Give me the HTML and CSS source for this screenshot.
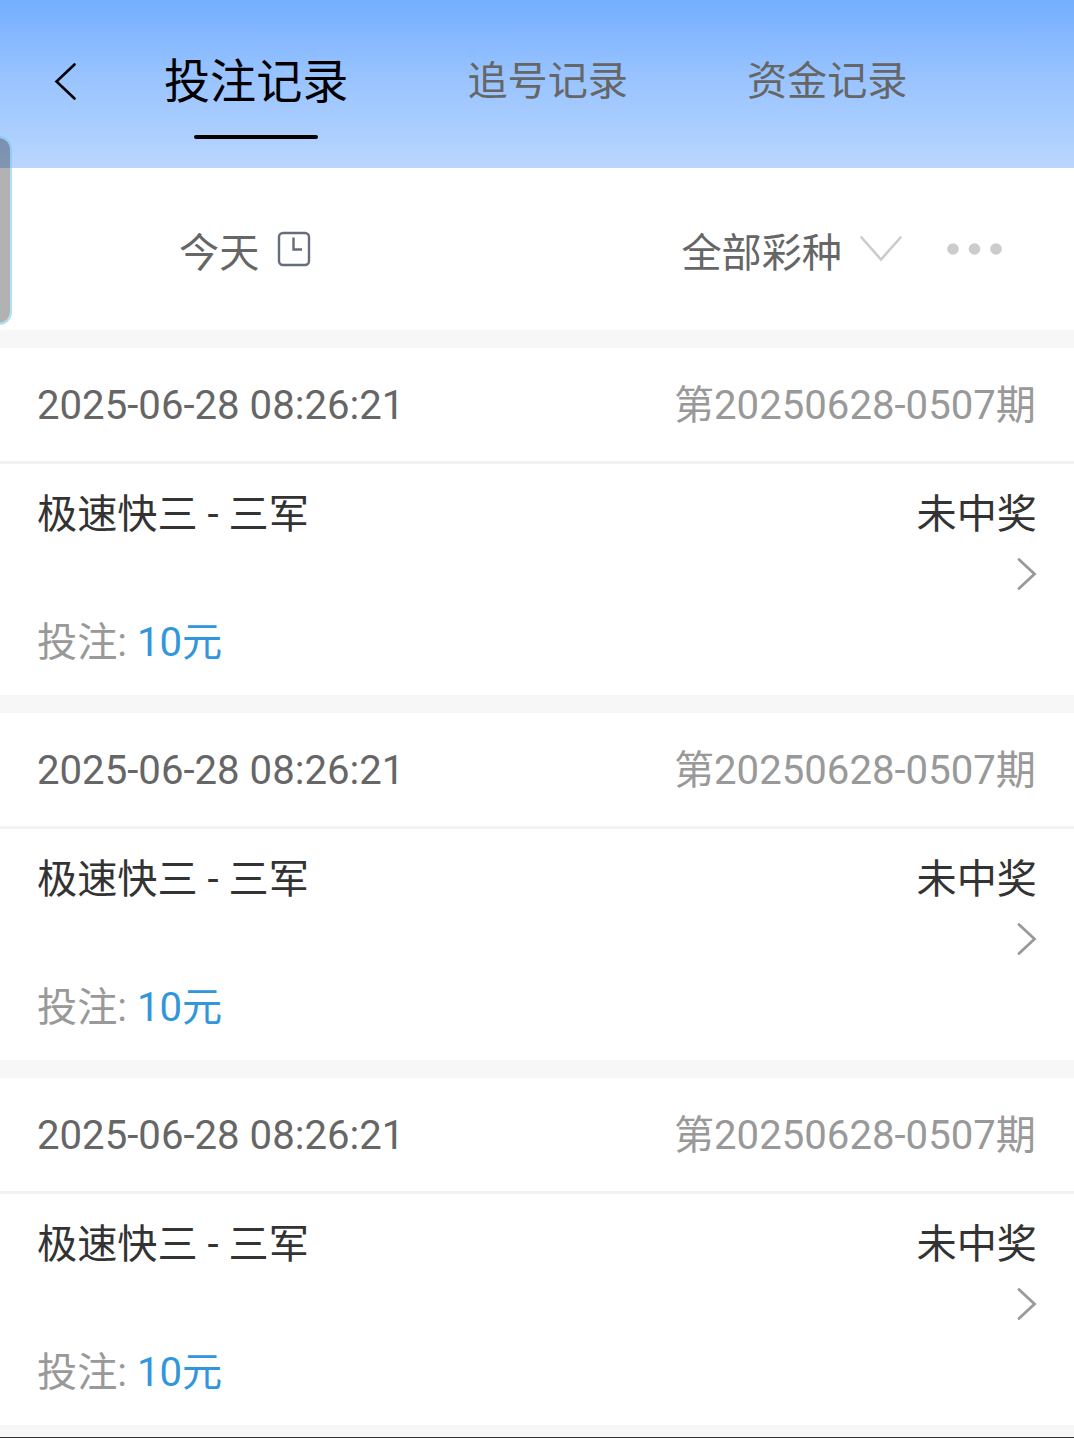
FILE: index.html
```html
<!DOCTYPE html>
<html lang="zh-CN">

<head>
    <meta charset="UTF-8">
    <title>投注记录</title>
    <link rel="stylesheet" href="styles.css">
</head>

<body>
    <div class="screen">
        <header class="header">
            <svg class="back" width="24" height="40" viewBox="0 0 24 40">
                <path d="M21.5 3.5 3.5 20.5 21.5 37.5"></path>
            </svg>
            <nav class="tabs">
                <a class="tab active">投注记录</a>
                <a class="tab">追号记录</a>
                <a class="tab">资金记录</a>
            </nav>
        </header>

        <section class="filters">
            <div class="filter">
                <span>今天</span>
                <svg class="clock" width="34" height="36" viewBox="0 0 34 36">
                    <rect x="2" y="2" width="30" height="32" rx="4"></rect>
                    <path d="M16.5 6.5V18.5H25"></path>
                </svg>
            </div>
            <div class="filter">
                <span>全部彩种</span>
                <svg class="arrow-down" width="42" height="26" viewBox="0 0 42 26">
                    <path d="M1.5 1.5 21 23.5 40.5 1.5"></path>
                </svg>
                <svg class="dots" width="56" height="12" viewBox="0 0 56 12">
                    <circle cx="6" cy="6" r="5.8"></circle>
                    <circle cx="27.5" cy="6" r="5.8"></circle>
                    <circle cx="49" cy="6" r="5.8"></circle>
                </svg>
            </div>
        </section>

        <main class="list">
            <article class="record">
                <div class="record-head">
                    <span class="time">2025-06-28 08:26:21</span>
                    <span class="issue">第20250628-0507期</span>
                </div>
                <div class="record-body">
                    <div class="row">
                        <span>极速快三 - 三军</span>
                        <span>未中奖</span>
                    </div>
                    <svg class="arrow" width="20" height="34" viewBox="0 0 20 34">
                        <path d="M2 2.5 17.5 17 2 31.5"></path>
                    </svg>
                    <p class="bet">投注: <b>10元</b></p>
                </div>
            </article>

            <article class="record">
                <div class="record-head">
                    <span class="time">2025-06-28 08:26:21</span>
                    <span class="issue">第20250628-0507期</span>
                </div>
                <div class="record-body">
                    <div class="row">
                        <span>极速快三 - 三军</span>
                        <span>未中奖</span>
                    </div>
                    <svg class="arrow" width="20" height="34" viewBox="0 0 20 34">
                        <path d="M2 2.5 17.5 17 2 31.5"></path>
                    </svg>
                    <p class="bet">投注: <b>10元</b></p>
                </div>
            </article>

            <article class="record">
                <div class="record-head">
                    <span class="time">2025-06-28 08:26:21</span>
                    <span class="issue">第20250628-0507期</span>
                </div>
                <div class="record-body">
                    <div class="row">
                        <span>极速快三 - 三军</span>
                        <span>未中奖</span>
                    </div>
                    <svg class="arrow" width="20" height="34" viewBox="0 0 20 34">
                        <path d="M2 2.5 17.5 17 2 31.5"></path>
                    </svg>
                    <p class="bet">投注: <b>10元</b></p>
                </div>
            </article>
        </main>

        <div class="edge-handle"></div>
    </div>
</body>

</html>
```
FILE: styles.css
```css
* {
    box-sizing: border-box;
}

body {
    margin: 0;
    font-family: Roboto, "Noto Sans CJK SC", sans-serif;
    font-size: 40.15px;
    line-height: 60px;
    color: #333;
}

svg {
    display: block;
    flex: none;
    fill: none;
    stroke-linecap: round;
}

.screen {
    position: relative;
    height: 1438px;
    overflow: hidden;
    background: #f7f7f7;
    border-bottom: 1px solid #333;
}

/* header */
.header {
    display: flex;
    height: 168px;
    padding-left: 53px;
    background: linear-gradient(#74aeff, #98c3ff 45%, #b9d6ff);
}

.back {
    margin-top: 61px;
    stroke: #000;
    stroke-width: 2.6;
}

.tabs {
    display: flex;
    gap: 119px;
    margin-left: 87px;
    padding-top: 52px;
}

.tab {
    color: #666;
    white-space: nowrap;
}

.tab.active {
    font-size: 46.1px;
    color: #000;
}

.tab.active::after {
    content: "";
    display: block;
    width: 124px;
    height: 4px;
    margin: 23px auto 0;
    border-radius: 2px;
    background: #000;
}

/* filters */
.filters {
    display: flex;
    justify-content: space-between;
    height: 162px;
    padding: 0 71px 0 179px;
    background: #fff;
    color: #666;
}

.filter {
    display: flex;
    align-items: center;
}

.filter span {
    padding-top: 9px;
}

.clock {
    margin-left: 18px;
    stroke: #666c7c;
    stroke-width: 2.4;
}

.clock path {
    stroke-linecap: butt;
}

.arrow-down {
    margin-left: 18px;
    stroke: #ccc;
    stroke-width: 2.6;
}

.dots {
    margin-left: 45px;
    fill: #ccc;
}

/* records */
.list {
    display: grid;
    gap: 18px;
    padding-top: 18px;
}

.record {
    height: 347px;
    background: #fff;
}

.record-head,
.row {
    display: flex;
    justify-content: space-between;
}

.record-head {
    height: 116px;
    padding: 28px 38px 0 37px;
    border-bottom: 3px solid #f2f2f2;
}

.time {
    color: #666;
}

.issue,
.bet {
    color: #999;
}

.record-body {
    padding: 21px 37px 0;
}

.arrow {
    margin: 12px 0 0 auto;
    stroke: #999;
    stroke-width: 2.8;
}

.bet {
    margin: 22px 0 0;
}

.bet b {
    font-weight: normal;
    color: #3296dc;
}

/* system side panel handle, lies over the page */
.edge-handle {
    position: absolute;
    top: 136px;
    left: -14px;
    width: 26px;
    height: 189px;
    border: 2px solid rgba(120, 205, 235, .6);
    border-radius: 14px;
    background: rgba(0, 0, 0, .3);
    background-clip: padding-box;
}
```
